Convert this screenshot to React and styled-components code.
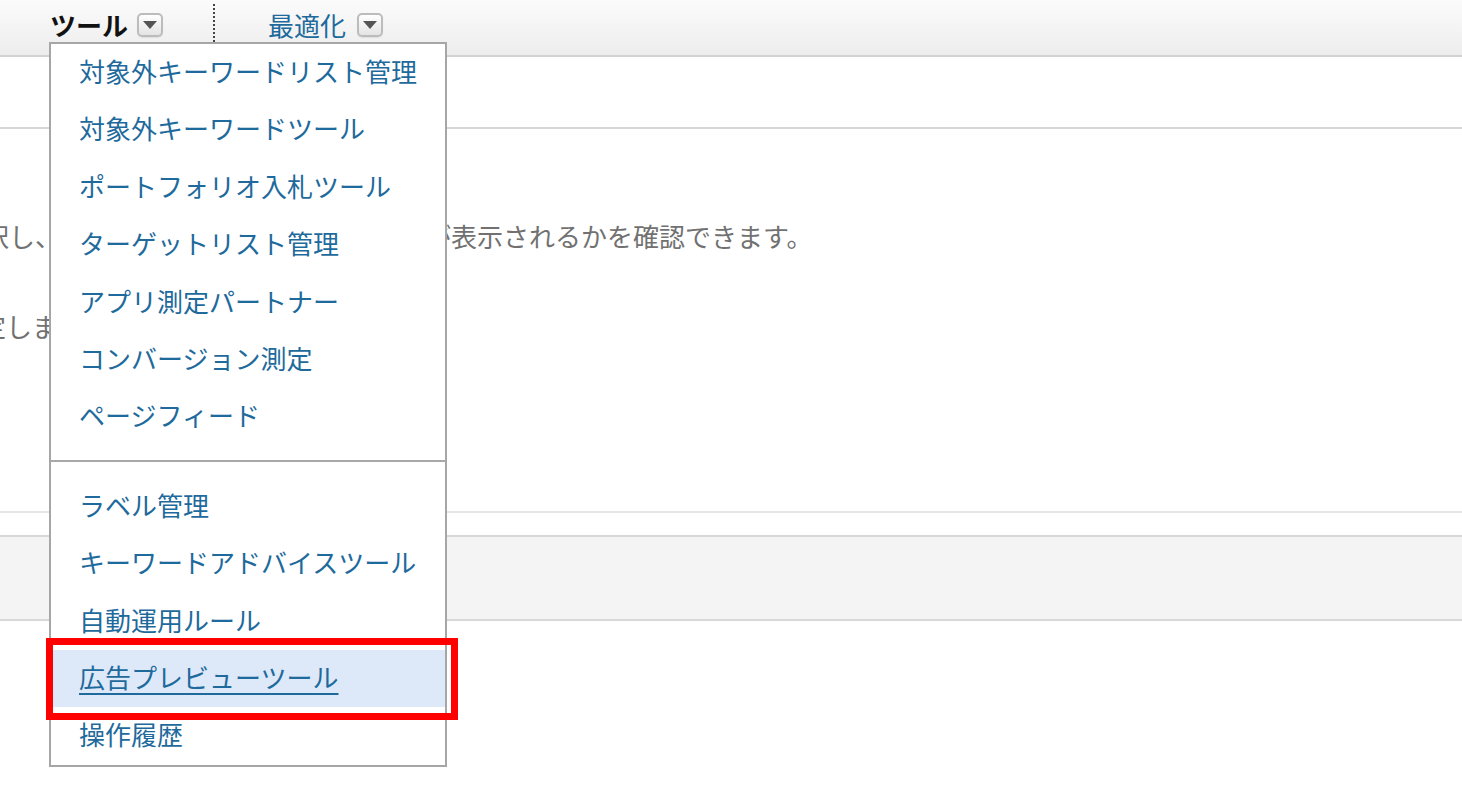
import React from 'react';
import styled, { createGlobalStyle } from 'styled-components';

const GlobalStyle = createGlobalStyle`
  html, body {
    margin: 0;
    padding: 0;
    background: #ffffff;
    overflow: hidden;
  }
  body {
    font-family: 'Noto Sans CJK JP', 'Noto Sans', sans-serif;
  }
`;

const Page = styled.div`
  position: relative;
  width: 100%;
  min-height: 786px;
`;

const Toolbar = styled.div`
  box-sizing: border-box;
  display: flex;
  align-items: center;
  height: 57px;
  padding: 0 0 6px 50px;
  background: linear-gradient(#fbfbfb, #ededed);
  border-bottom: 2px solid #d2d2d2;
`;

const Tab = styled.div`
  display: flex;
  align-items: center;
  gap: ${({ $gap }) => $gap}px;
  padding: ${({ $pad }) => $pad};
  font-size: 26px;
  line-height: 30px;
  font-weight: ${({ $active }) => ($active ? 700 : 400)};
  color: ${({ $active }) => ($active ? '#111111' : '#1e6a9c')};
`;

const Separator = styled.div`
  align-self: flex-start;
  margin-top: 4px;
  height: 38px;
  border-left: 2px dotted #444;
`;

const DropButton = styled.span`
  box-sizing: border-box;
  display: inline-flex;
  align-items: center;
  justify-content: center;
  width: 26px;
  height: 24px;
  border: 2px solid #bcbcbc;
  border-radius: 5px;
  background: linear-gradient(#ffffff, #e4e4e4);
  box-shadow: 0 1px 1px rgba(0, 0, 0, 0.08);
`;

const Caret = () => (
  <svg width="14" height="8" viewBox="0 0 14 8">
    <polygon points="0,0 14,0 7,8" fill="#555555" />
  </svg>
);

const TopSection = styled.div`
  height: 70px;
  border-bottom: 2px solid #d6d6d6;
`;

const Description = styled.div`
  box-sizing: border-box;
  height: 384px;
  padding-top: 87px;
  border-bottom: 2px solid #e6e6e6;
`;

const Text = styled.p`
  margin: ${({ $top }) => $top}px 0 0 ${({ $indent }) => $indent}px;
  font-size: 26px;
  line-height: 40px;
  color: #717171;
  white-space: nowrap;
`;

const Spacer = styled.div`
  height: 22px;
`;

const Band = styled.div`
  height: 82px;
  background: #f4f4f4;
  border-top: 2px solid #d8d8d8;
  border-bottom: 2px solid #d8d8d8;
`;

const Menu = styled.div`
  position: absolute;
  top: 42px;
  left: 49px;
  width: 394px;
  background: #ffffff;
  border: 2px solid #a6a6a6;
`;

const Group = styled.div`
  padding: ${({ $pad }) => $pad};
  border-top: ${({ $divided }) => ($divided ? '2px solid #a8a8a8' : 'none')};
`;

const Item = styled.div`
  position: relative;
  box-sizing: border-box;
  height: 57.4px;
  padding: 0 0 4px 28px;
  font-size: 26px;
  line-height: 53.4px;
  color: #1e6a9c;
  white-space: nowrap;
  background: ${({ $hover }) => ($hover ? '#dde8f8' : 'transparent')};
  text-decoration: ${({ $hover }) => ($hover ? 'underline' : 'none')};
  text-decoration-thickness: 2px;
  text-underline-offset: 5px;
`;

const RedFrame = styled.div`
  position: absolute;
  top: -12px;
  left: -5px;
  right: -13px;
  bottom: -13px;
  border: 7px solid #ff0000;
  pointer-events: none;
`;

const firstGroup = [
  '対象外キーワードリスト管理',
  '対象外キーワードツール',
  'ポートフォリオ入札ツール',
  'ターゲットリスト管理',
  'アプリ測定パートナー',
  'コンバージョン測定',
  'ページフィード',
];

const secondGroup = [
  'ラベル管理',
  'キーワードアドバイスツール',
  '自動運用ルール',
  '広告プレビューツール',
  '操作履歴',
];

const App = () => {
  return (
    <Page>
      <GlobalStyle />
      <Toolbar>
        <Tab $active $gap={9} $pad="0 50px 0 0">
          ツール
          <DropButton><Caret /></DropButton>
        </Tab>
        <Separator />
        <Tab $gap={11} $pad="0 0 0 53px">
          最適化
          <DropButton><Caret /></DropButton>
        </Tab>
      </Toolbar>
      <TopSection />
      <Description>
        <Text $top={0} $indent={-43}>
          選択し、検索結果画面にどのような広告が表示されるかを確認できます。
        </Text>
        <Text $top={50} $indent={-46}>
          設定します。
        </Text>
      </Description>
      <Spacer />
      <Band />

      <Menu>
        <Group $pad="0 0 14px">
          {firstGroup.map((label) => (
            <Item key={label}>{label}</Item>
          ))}
        </Group>
        <Group $divided $pad="16px 0 0">
          {secondGroup.map((label) => {
            const current = label === '広告プレビューツール';
            return (
              <Item key={label} $hover={current}>
                {label}
                {current && <RedFrame />}
              </Item>
            );
          })}
        </Group>
      </Menu>
    </Page>
  );
};

export default App;
